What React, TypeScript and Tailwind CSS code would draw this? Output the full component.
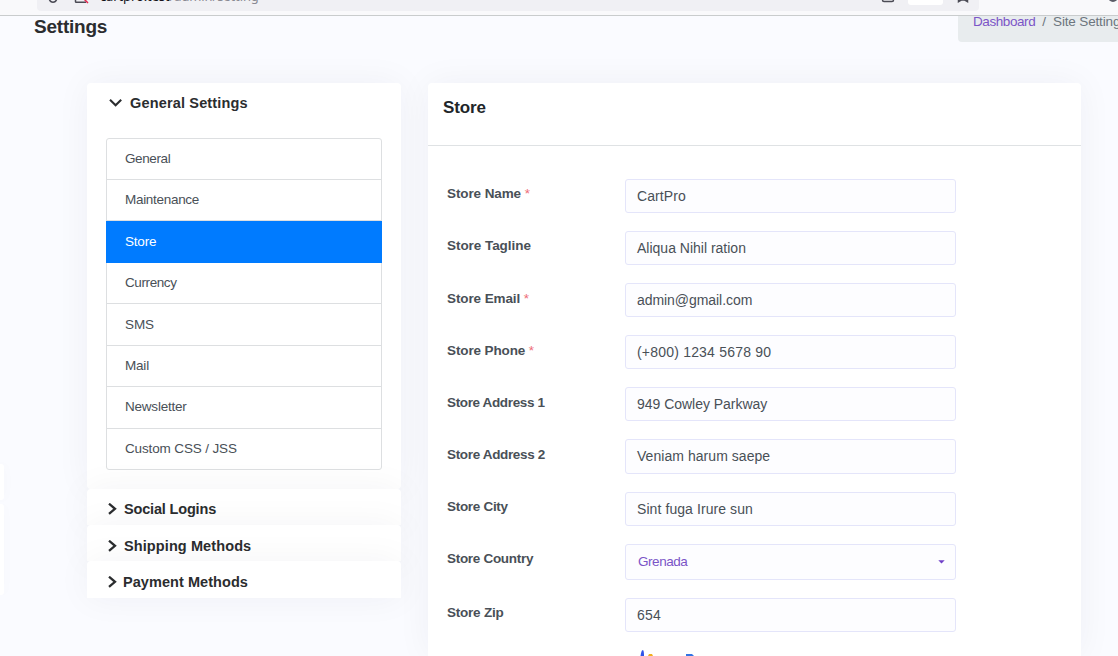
import React from "react";

const links: { label: string; height: string; text: string }[] = [
  { label: "General", height: "h-[41px]", text: "tracking-[-0.4px]" },
  { label: "Maintenance", height: "h-[41px]", text: "tracking-[-0.3px]" },
  { label: "Store", height: "h-[42px]", text: "tracking-[-0.2px]" },
  { label: "Currency", height: "h-[41px]", text: "tracking-[-0.4px]" },
  { label: "SMS", height: "h-[42px] pt-px", text: "tracking-[-0.1px]" },
  { label: "Mail", height: "h-[41px]", text: "tracking-[-0.2px]" },
  { label: "Newsletter", height: "h-[42px] pb-px", text: "tracking-[-0.22px]" },
  { label: "Custom CSS / JSS", height: "h-[40px]", text: "tracking-[-0.14px]" },
];

const fields: {
  label: string;
  value: string;
  required?: boolean;
  gap: string;
  height: string;
  labelText: string;
  text: string;
}[] = [
  { label: "Store Name", value: "CartPro", required: true, gap: "h-[52px]", height: "h-[34px]", labelText: "pt-[6px] tracking-[-0.1px]", text: "tracking-[0.1px]" },
  { label: "Store Tagline", value: "Aliqua Nihil ration", gap: "h-[52px]", height: "h-[34px]", labelText: "pt-[6px] tracking-[-0.05px]", text: "" },
  { label: "Store Email", value: "admin@gmail.com", required: true, gap: "h-[52px]", height: "h-[34px]", labelText: "pt-[7px] tracking-[-0.1px]", text: "tracking-[-0.06px]" },
  { label: "Store Phone", value: "(+800) 1234 5678 90", required: true, gap: "h-[52px]", height: "h-[34px]", labelText: "pt-[7px] tracking-[-0.12px]", text: "tracking-[0.2px]" },
  { label: "Store Address 1", value: "949 Cowley Parkway", gap: "h-[52px]", height: "h-[34px]", labelText: "pt-[7px] tracking-[-0.36px]", text: "tracking-[-0.03px]" },
  { label: "Store Address 2", value: "Veniam harum saepe", gap: "h-[53px]", height: "h-[35px] pb-px", labelText: "pt-[7px] tracking-[-0.34px]", text: "tracking-[0.05px]" },
  { label: "Store City", value: "Sint fuga Irure sun", gap: "h-[52px]", height: "h-[34px]", labelText: "pt-[6px] tracking-[-0.3px]", text: "tracking-[0.08px]" },
];

function Chevron({ down = false }: { down?: boolean }) {
  return down ? (
    <svg width="14" height="10" viewBox="0 0 14 10" fill="none" stroke="#2b2d2f" strokeWidth="2.1">
      <path d="M1 1.8 L6.600 7.2 L12.200 1.8" />
    </svg>
  ) : (
    <svg width="9" height="12" viewBox="0 0 9 12" fill="none" stroke="#2b2d2f" strokeWidth="2.3">
      <path d="M1 0.700 L7 5.800 L1 10.900" />
    </svg>
  );
}

function BrowserBar() {
  return (
    <div className="relative z-10 flex h-4 shrink-0 overflow-hidden border-b border-[#c9cccd] bg-[#f9f9fb] pl-[37px]">
      <div className="relative h-[11px] w-[942px] shrink-0 rounded-b-[4px] bg-[#f0f0f4]">
        <svg className="absolute left-0 top-0" width="942" height="11" fill="none" stroke="#4b4b55" strokeWidth="1.5">
          <path d="M12 -2 C12.5 1 14 2.2 16 2.2 S19.500 1 20 -2" />
          <path d="M38.500 -4 V1.500 Q38.500 2.200 39.500 2.200 H49" />
          <path d="M46 -2 L51 3" stroke="#e22850" />
          <rect x="845.500" y="-8" width="11" height="9.500" rx="1.500" />
          <path d="M921.500 -5 V1.700 L924.200 0 H927.800 L930.500 1.700 V-5" />
          <rect x="871" y="-8" width="35" height="13" rx="3" fill="#fff" stroke="none" />
        </svg>
        <span className="absolute left-[63px] top-[-13px] whitespace-nowrap font-['Noto_Sans',sans-serif] text-[13px] leading-[18px] tracking-[-0.12px] text-[#8a8a93]">
          <span className="text-[#15141a]">cartpro.test</span>/admin/setting
        </span>
      </div>
      <svg className="ml-[127px]" width="12" height="6" fill="none" stroke="#5b5b66" strokeWidth="2">
        <circle cx="7" cy="-3" r="4" />
      </svg>
    </div>
  );
}

function SideGroup({ title, className, text }: { title: string; className: string; text: string }) {
  return (
    <div className={`relative flex gap-[7px] rounded-t-[4px] bg-white pl-[21px] shadow-[0_0_35px_rgba(8,21,66,0.05)] ${className}`}>
      <span className="mt-[14px]"><Chevron /></span>
      <h2 className={`mt-[11px] whitespace-nowrap text-[14.5px] font-bold leading-[18px] text-[#2b2d2f] ${text}`}>{title}</h2>
    </div>
  );
}

export default function App() {
  return (
    <div className="flex h-[656px] w-[1118px] flex-col overflow-hidden bg-[#fafbff] font-['Liberation_Sans',Arial,sans-serif]">
      <BrowserBar />
      <header className="flex h-[67px] shrink-0 justify-between pl-[34px]">
        <h1 className="text-[19px] font-bold leading-[22px] tracking-[-0.22px] text-[#2b2d2f]">Settings</h1>
        <nav className="h-[26px] w-[160px] overflow-hidden whitespace-nowrap rounded-bl-[4px] bg-[#e8ecee] pl-[15px] text-[13.5px] leading-[12px] text-[#6c757d]">
          <span className="tracking-[-0.42px] text-[#7b55c7]">Dashboard</span>
          <span className="px-[7px]">/</span>
          <span className="tracking-[-0.15px]">Site Settings</span>
        </nav>
      </header>

      <div className="flex min-h-0 flex-1">
        <div className="flex w-[87px] shrink-0 flex-col gap-1 pt-[381px]">
          <div className="h-9 w-1 rounded-r-[3px] bg-white shadow-[0_0_12px_rgba(8,21,66,0.04)]" />
          <div className="h-[91px] w-1 rounded-r-[3px] bg-white shadow-[0_0_12px_rgba(8,21,66,0.03)]" />
        </div>

        <aside className="w-[314px] shrink-0">
          <section className="h-[406px] rounded-[4px] bg-white px-[19px] shadow-[0_0_35px_rgba(8,21,66,0.05)]">
            <div className="flex h-[55px] items-start gap-[7px] pl-[3px]">
              <span className="mt-[15px]"><Chevron down /></span>
              <h2 className="mt-[11px] text-[14.5px] font-bold leading-[18px] tracking-[0.16px] text-[#2b2d2f]">General Settings</h2>
            </div>
            <ul className="w-[276px] rounded-[3px] border border-[#dddfe1]">
              {links.map((l, i) => {
                const active = l.label === "Store";
                const last = i === links.length - 1;
                return (
                  <li
                    key={l.label}
                    className={`flex items-center text-[13.5px] ${l.height} ${l.text} ${
                      active
                        ? "-mx-px bg-[#007bff] pl-[19px] text-white"
                        : `pl-[18px] text-[#495057] ${last ? "" : "border-b border-[#dddfe1]"}`
                    }`}
                  >
                    {l.label}
                  </li>
                );
              })}
            </ul>
          </section>
          <SideGroup title="Social Logins" className="h-9" text="tracking-[-0.17px]" />
          <SideGroup title="Shipping Methods" className="h-9 pt-px" text="tracking-[0.1px]" />
          <SideGroup title="Payment Methods" className="h-[37px] pt-px" text="-ml-px tracking-[0.06px]" />
        </aside>

        <main className="ml-[27px] w-[653px] shrink-0 rounded-t-[4px] bg-white shadow-[0_0_35px_rgba(8,21,66,0.05)]">
          <div className="h-[63px] border-b border-[#dfe2e4] pl-[15px] pt-[15px]">
            <h2 className="text-[17px] font-bold leading-5 tracking-[-0.1px] text-[#212529]">Store</h2>
          </div>
          <form className="pl-[19px] pt-[33px]">
            {fields.map((f) => (
              <div key={f.label} className={`flex ${f.gap}`}>
                <label className={`w-[178px] shrink-0 text-[13.5px] font-bold leading-[18px] text-[#495057] ${f.labelText}`}>
                  {f.label}
                  {f.required && <span className="font-normal text-[#ee6b75]"> *</span>}
                </label>
                <div className={`flex w-[331px] items-center rounded-[3px] border border-[#e4e5fa] bg-[#fdfdff] pl-[11px] text-[14px] text-[#495057] ${f.height} ${f.text}`}>
                  {f.value}
                </div>
              </div>
            ))}
            <div className="flex h-[54px]">
              <label className="w-[178px] shrink-0 pt-[6px] text-[13.5px] font-bold leading-[18px] tracking-[-0.3px] text-[#495057]">Store Country</label>
              <div className="flex h-[36px] w-[331px] items-center justify-between rounded-[3px] border border-[#e4e5fa] bg-[#fdfdff] pl-3 pr-[10px] text-[13.5px] tracking-[-0.45px] text-[#7b55c7]">
                Grenada
                <svg width="7" height="4" fill="#7040c8"><path d="M0.300 0.300 H6.700 L3.500 3.500 Z" /></svg>
              </div>
            </div>
            <div className="flex h-[52px]">
              <label className="w-[178px] shrink-0 pt-[6px] text-[13.5px] font-bold leading-[18px] tracking-[-0.23px] text-[#495057]">Store Zip</label>
              <div className="flex h-[34px] w-[331px] items-center rounded-[3px] border border-[#e4e5fa] bg-[#fdfdff] pl-[11px] text-[14px] tracking-[0.2px] text-[#495057]">654</div>
            </div>
            <svg className="ml-[178px]" width="80" height="6">
              <path d="M15.500 6 C16 3 16.500 0 18 0 C19 1 19 4 19 6 Z" fill="#3054e8" />
              <path d="M23 6 L24 4 H27 L28 6 Z" fill="#f2b01e" />
              <path d="M61 6 V4 H67 L69 6 Z" fill="#3274e4" />
            </svg>
          </form>
        </main>
      </div>
    </div>
  );
}
